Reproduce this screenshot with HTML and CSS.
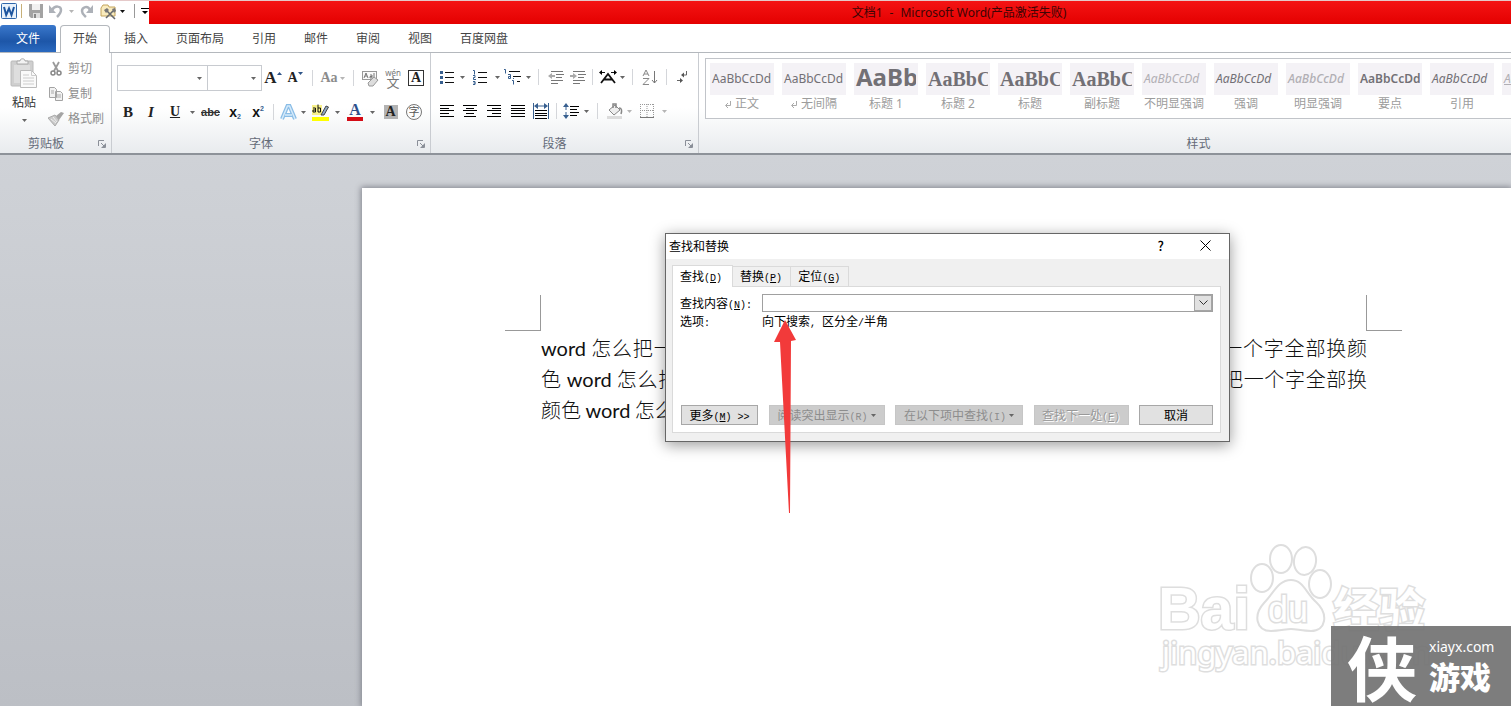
FILE: index.html
```html
<!DOCTYPE html>
<html lang="zh-CN">
<head>
<meta charset="utf-8">
<title>文档1 - Microsoft Word</title>
<link rel="stylesheet" href="styles.css">
</head>
<body>
<svg class="defs" width="0" height="0" aria-hidden="true">
  <symbol id="dd" viewBox="0 0 5 3"><path d="M0 0h5L2.500 3z"/></symbol>
  <symbol id="launch" viewBox="0 0 8 8"><path d="M.5 6V.5H6M3 3l3 3M7.500 3.500v4h-4" fill="none" stroke="#8a8f98"/><path d="M7 4v3H4z" fill="#8a8f98"/></symbol>
</svg>
<header class="titlebar">
  <div class="quick">
    <svg width="18" height="22" viewBox="0 0 18 22"><rect x="1.500" y="3.500" width="15" height="15" rx="1" fill="#e8f1fb" stroke="#2f66ab"/><path d="M4 7l2.200 8L9 8.500 11.500 15 14 7" fill="none" stroke="#1d559f" stroke-width="2"/></svg>
    <span class="qsep tan"></span>
    <button aria-label="保存"><svg width="14" height="14" viewBox="0 0 14 14"><path d="M0 0h14v14H2l-2-2z" fill="#a3a3a3"/><path d="M3 0h8v6H3z" fill="#f1f1f1"/><path d="M4 9h7v5H4z" fill="#ddd"/><path d="M5 10h2v4H5z" fill="#888"/></svg></button>
    <button aria-label="撤消"><svg width="14" height="14" viewBox="0 0 14 14"><path d="M3 6c3-5 9-4 9 0 0 3-2 5-4 7" fill="none" stroke="#adb1b8" stroke-width="2.500"/><path d="M0 1v8h7z" fill="#adb1b8"/></svg></button>
    <svg class="dd pale" width="5" height="3"><use href="#dd"/></svg>
    <button aria-label="恢复"><svg width="14" height="14" viewBox="0 0 14 14"><path d="M10 6C8 1 2 3 2 7c0 3 2 4 4 6" fill="none" stroke="#adb1b8" stroke-width="2.500"/><path d="M13 1v8H6z" fill="#adb1b8"/></svg></button>
    <button aria-label="工具"><svg width="18" height="17" viewBox="0 0 18 17"><path d="M1 5l2-3h5l1 2h6v9H1z" fill="#f9ebbd" stroke="#c3a45c"/><path d="M6 7l9 9M14 7l-8 8" stroke="#66696e" stroke-width="1.600"/><path d="M4 7l3-2 2 2-3 3zM12 6l3-1 1 3-2 2z" fill="#777"/></svg></button>
    <svg class="dd black" width="5" height="3"><use href="#dd"/></svg>
    <span class="qsep"></span>
    <svg width="8" height="7" viewBox="0 0 8 7"><path d="M0 0h8v1H0zM1 3h6L4 6z"/></svg>
  </div>
  <h1 class="title"><span>文档1</span><span>-</span><span>Microsoft Word(产品激活失败)</span></h1>
</header>
<nav class="tabs">
  <button class="tab file">文件</button>
  <button class="tab active">开始</button>
  <button class="tab">插入</button><button class="tab">页面布局</button><button class="tab">引用</button><button class="tab">邮件</button><button class="tab">审阅</button><button class="tab">视图</button><button class="tab">百度网盘</button>
</nav>
<section class="ribbon">
  <div class="group clipboard">
    <div class="clip-body">
      <button class="paste">
        <svg width="28" height="31" viewBox="0 0 28 31"><rect x="1" y="3" width="22" height="25" rx="1" fill="#cfcfcf" stroke="#bababa"/><rect x="4" y="7" width="16" height="18" fill="#dedede"/><path d="M7 6V3h3c0-3 5-3 5 0h3v3z" fill="#f3f3f3" stroke="#aaa"/><path d="M10.500 12.500h11l5 5v12h-16z" fill="#fafafa" stroke="#bbb"/><path d="M21.500 12.500v5h5M13 17h6M13 20h11M13 23h11M13 26h11" fill="none" stroke="#ccc"/></svg>
        <span>粘贴</span><svg class="dd" width="5" height="3"><use href="#dd"/></svg>
      </button>
      <div class="clip-list">
        <button><svg width="16" height="16" viewBox="0 0 16 16"><path d="M5 1l5 9M11 1l-5 9" stroke="#9a9a9a" stroke-width="1.800"/><circle cx="5" cy="12" r="2" fill="none" stroke="#888" stroke-width="1.500"/><circle cx="11" cy="12" r="2" fill="none" stroke="#888" stroke-width="1.500"/></svg>剪切</button>
        <button><svg width="16" height="16" viewBox="0 0 16 16"><path d="M1.500 1.500h5l2 2v8h-7zM7.500 5.500h5l2 2v7h-7z" fill="#f2f2f2" stroke="#a3a3a3"/><path d="M3 5h3M3 7h3M9 9h4M9 11h4" stroke="#aaa"/></svg>复制</button>
        <button><svg width="16" height="16" viewBox="0 0 16 16"><path d="M0 7l7-3 4 5-4 6z" fill="#c9c9c9" stroke="#aaa"/><path d="M8 5l5-4 3 1-5 7z" fill="#a4a4a4"/><path d="M3 8l5 4M5 6l4 5" stroke="#eee"/></svg>格式刷</button>
      </div>
    </div>
    <footer><span>剪贴板</span><svg width="8" height="8"><use href="#launch"/></svg></footer>
  </div>
  <div class="group font">
    <div class="row f1">
      <div class="combo"><input aria-label="字体"><svg class="dd" width="5" height="3"><use href="#dd"/></svg></div>
      <div class="combo"><input aria-label="字号"><svg class="dd" width="5" height="3"><use href="#dd"/></svg></div>
      <button class="serif g16">A<svg width="5" height="3" viewBox="0 0 5 3"><path d="M0 3h5L2.500 0z" fill="#2e5488"/></svg></button>
      <button class="serif g13">A<svg width="5" height="3" viewBox="0 0 5 3"><path d="M0 0h5L2.500 3z" fill="#2e5488"/></svg></button>
      <span class="sep"></span>
      <button class="serif case">Aa<svg class="dd pale" width="5" height="3"><use href="#dd"/></svg></button>
      <span class="sep"></span>
      <button aria-label="清除格式"><svg width="17" height="17" viewBox="0 0 17 17"><rect x=".5" y="1.500" width="14" height="8" fill="#fafafa" stroke="#999"/><path d="M2 8l2-5 2 5M3 6h2M8 5h2v3H8V6.500h2M12 3v5" fill="none" stroke="#777"/><path d="M6 13l6-6 4 3-5 6H7z" fill="#ddd" stroke="#999"/></svg></button>
      <button class="pinyin"><span>wén</span><b>文</b></button>
      <button class="serif boxed">A</button>
    </div>
    <div class="row f2">
      <button class="serif g15">B</button><button class="serif g15 ital">I</button><button class="serif g13 uline">U</button><svg class="dd" width="5" height="3"><use href="#dd"/></svg>
      <button class="strike">abc</button><button class="sub">x<sub>2</sub></button><button class="sub">x<sup>2</sup></button><span class="sep"></span>
      <button aria-label="文本效果"><svg width="17" height="17" viewBox="0 0 17 17"><path d="M2 15L7.500 2h2L15 15M5 11h7" fill="none" stroke="#8abde6" stroke-width="4"/><path d="M2 15L7.500 2h2L15 15M5 11h7" fill="none" stroke="#d5eafa" stroke-width="1.500"/></svg></button><svg class="dd" width="5" height="3"><use href="#dd"/></svg>
      <button aria-label="突出显示"><svg width="17" height="18" viewBox="0 0 17 18"><path d="M0 2h10v10H0z" fill="#f7f08a"/><path d="M0 14h17v4H0z" fill="#ff0"/><path d="M1 5h2.500v4H1V7h2M6 1.500V9h2.500V5H6" fill="none" stroke="#111"/><path d="M9 12l5-9 2.500 1-4.500 8z" fill="#8fa9c5" stroke="#444"/></svg></button><svg class="dd" width="5" height="3"><use href="#dd"/></svg>
      <button class="serif color">A</button><svg class="dd" width="5" height="3"><use href="#dd"/></svg>
      <button class="serif shade">A</button><button class="circle">字</button>
    </div>
    <footer><span>字体</span><svg width="8" height="8"><use href="#launch"/></svg></footer>
  </div>
  <div class="group para">
    <div class="row p1">
      <button aria-label="项目符号"><svg width="14" height="13" viewBox="0 0 14 13"><path d="M5 1.500h9M5 6.500h9M5 11.500h9" stroke="#111"/><path d="M0 0h3v3H0zM0 5h3v3H0zM0 10h3v3H0z" fill="#375f8f"/></svg></button><svg class="dd" width="5" height="3"><use href="#dd"/></svg>
      <button aria-label="编号"><svg width="14" height="15" viewBox="0 0 14 15"><path d="M5 2.500h9M5 7.500h9M5 12.500h9" stroke="#111"/><path d="M0 .5h1.500v4M0 5.500h2v2H.5v2H3M0 11.500h2v3H0M.5 13h2" fill="none" stroke="#375f8f"/></svg></button><svg class="dd" width="5" height="3"><use href="#dd"/></svg>
      <button aria-label="多级列表"><svg width="18" height="16" viewBox="0 0 18 16"><path d="M5 2.500h11M9 7.500h8M13 12.500h3" stroke="#111"/><path d="M0 .5h1.500v4M4 5.500h2.500v4h-2v-2h2M8 11.500h1.500v4M9 9.500h1" fill="none" stroke="#375f8f"/></svg></button><svg class="dd" width="5" height="3"><use href="#dd"/></svg>
      <span class="sep"></span>
      <button aria-label="减少缩进"><svg width="16" height="14" viewBox="0 0 16 14"><path d="M3 1.500h12M8 4.500h8M8 7.500h6M3 10.500h12M3 13.500h7" stroke="#777"/><path d="M0 6l4-3v2h3v2H4v2z" fill="#aaa"/></svg></button>
      <button aria-label="增加缩进"><svg width="16" height="14" viewBox="0 0 16 14"><path d="M3 1.500h12M8 4.500h8M8 7.500h6M3 10.500h12M3 13.500h7" stroke="#777"/><path d="M7 6L3 3v2H0v2h3v2z" fill="#aaa"/></svg></button>
      <span class="sep"></span>
      <button aria-label="中文版式"><svg width="18" height="14" viewBox="0 0 18 14"><path d="M2 13L9 4l7 9M5 9.500h8" fill="none" stroke="#111" stroke-width="1.800"/><path d="M2 2.500h4M12 2.500h4" stroke="#111"/><path d="M3 0v5L0 2.500zM15 0v5l3-2.500z"/></svg></button><svg class="dd" width="5" height="3"><use href="#dd"/></svg>
      <span class="sep"></span>
      <button aria-label="排序"><svg width="16" height="17" viewBox="0 0 16 17"><path d="M1 7l3-6 3 6M2 5h4M1 9.500h6l-6 6h6" fill="none" stroke="#888"/><path d="M12.500 2v12M10 11l2.500 3L15 11" fill="none" stroke="#777"/></svg></button>
      <span class="sep"></span>
      <button aria-label="显示编辑标记"><svg width="12" height="13" viewBox="0 0 12 13"><path d="M9.500 0v4H5M0 9.500h4" fill="none" stroke="#666"/><path d="M7 1.500v5L4 4zM3 7v5l3-2.500z" fill="#555"/></svg></button>
    </div>
    <div class="row p2">
      <button aria-label="左对齐"><svg width="14" height="12" viewBox="0 0 14 12"><path d="M0 .5h14M0 3.500h9M0 5.500h14M0 8.500h9M0 11.500h14" stroke="#000"/></svg></button>
      <button aria-label="居中"><svg width="14" height="12" viewBox="0 0 14 12"><path d="M0 .5h14M3 3.500h8M0 5.500h14M3 8.500h8M1 11.500h12" stroke="#000"/></svg></button>
      <button aria-label="右对齐"><svg width="14" height="12" viewBox="0 0 14 12"><path d="M0 .5h14M5 3.500h9M0 5.500h14M5 8.500h9M0 11.500h14" stroke="#000"/></svg></button>
      <button aria-label="两端对齐"><svg width="14" height="12" viewBox="0 0 14 12"><path d="M0 .5h14M0 3.500h14M0 5.500h14M0 8.500h14M0 11.500h14" stroke="#000"/></svg></button>
      <button aria-label="分散对齐"><svg width="16" height="16" viewBox="0 0 16 16"><path d="M.5 0v16M15.500 0v16M3 3h10" stroke="#375f8f"/><path d="M5 0v6L1 3zM11 0v6l4-3z" fill="#375f8f"/><path d="M2 7.500h12M2 10.500h12M2 12.500h12M2 15.500h12" stroke="#000"/></svg></button>
      <span class="sep"></span>
      <button aria-label="行距"><svg width="16" height="16" viewBox="0 0 16 16"><path d="M3 2v12" stroke="#375f8f" stroke-dasharray="5 2"/><path d="M0 4l3-4 3 4zM0 12l3 4 3-4z" fill="#375f8f"/><path d="M7 3.500h9M7 6.500h7M7 9.500h9M7 12.500h7" stroke="#000"/></svg></button><svg class="dd" width="5" height="3"><use href="#dd"/></svg>
      <span class="sep"></span>
      <button aria-label="底纹"><svg width="16" height="16" viewBox="0 0 16 16"><path d="M0 13h15v3H0z" fill="#dcdcdc"/><path d="M2 7l6-5 5 5-6 5z" fill="#eee" stroke="#888"/><path d="M6 5V1h3v4M12 5c3 0 3 3 2 6" fill="none" stroke="#888" stroke-width="1.500"/></svg></button><svg class="dd pale" width="5" height="3"><use href="#dd"/></svg>
      <button aria-label="边框"><svg width="14" height="14" viewBox="0 0 14 14"><path d="M.5 0v13M13.500 0v13M7 0v13M0 .5h14M0 6.500h14" fill="none" stroke="#999" stroke-dasharray="1 1"/><path d="M0 13.500h14" stroke="#777"/></svg></button><svg class="dd pale" width="5" height="3"><use href="#dd"/></svg>
    </div>
    <footer><span>段落</span><svg width="8" height="8"><use href="#launch"/></svg></footer>
  </div>
  <div class="group styles">
    <div class="gallery">
      <button><span class="sample">AaBbCcDd</span><small><svg width="6" height="7" viewBox="0 0 6 7"><path d="M5.500 0v4.500H1M3 2L.5 4.500 3 7" fill="none" stroke="#aaa"/></svg>正文</small></button>
      <button><span class="sample">AaBbCcDd</span><small><svg width="6" height="7" viewBox="0 0 6 7"><path d="M5.500 0v4.500H1M3 2L.5 4.500 3 7" fill="none" stroke="#aaa"/></svg>无间隔</small></button>
      <button><span class="sample h1">AaBb</span><small>标题 1</small></button>
      <button><span class="sample h2">AaBbC</span><small>标题 2</small></button>
      <button><span class="sample h2">AaBbC</span><small>标题</small></button>
      <button><span class="sample h2">AaBbC</span><small>副标题</small></button>
      <button><span class="sample it light">AaBbCcDd</span><small>不明显强调</small></button>
      <button><span class="sample it">AaBbCcDd</span><small>强调</small></button>
      <button><span class="sample it light strong">AaBbCcDd</span><small>明显强调</small></button>
      <button><span class="sample bold">AaBbCcDd</span><small>要点</small></button>
      <button><span class="sample it">AaBbCcDd</span><small>引用</small></button>
      <button><span class="sample it light under">AaBbCcDd</span><small>&nbsp;</small></button>
    </div>
    <footer><span>样式</span></footer>
  </div>
</section>
<main class="workspace">
  <article class="page">
    <div class="marks"><i class="mark left"></i><i class="mark right"></i></div>
    <p class="line full"><span>word</span> 怎么把一个字全部换颜色 <span>word</span> 怎么把一个字全部换颜色 <span>word</span> 怎么把一个字全部换颜</p>
    <p class="line full">色 <span>word</span> 怎么把一个字全部换颜色 <span>word</span> 怎么把一个字全部换颜色 <span>word</span> 怎么把一个字全部换</p>
    <p class="line">颜色 <span>word</span> 怎么把一个字全部换颜色</p>
  </article>
</main>
<section class="dialog" role="dialog" aria-labelledby="dlg">
  <header class="dlg-title"><h2 id="dlg">查找和替换</h2><button class="help">?</button><button aria-label="关闭"><svg width="11" height="11" viewBox="0 0 11 11"><path d="M.5.5l10 10M10.500.5l-10 10" stroke="#000"/></svg></button></header>
  <div class="dlg-body">
    <div class="dlg-tabs"><button class="on">查找<span class="key">(<u>D</u>)</span></button><button>替换<span class="key">(<u>P</u>)</span></button><button>定位<span class="key">(<u>G</u>)</span></button></div>
    <div class="panel">
      <div class="field"><label for="q">查找内容<span class="key">(<u>N</u>):</span></label><div class="find"><input id="q"><button aria-label="展开"><svg width="9" height="6" viewBox="0 0 9 6"><path d="M.5.5l4 4 4-4" fill="none" stroke="#333"/></svg></button></div></div>
      <div class="field opts"><span>选项<span class="key">:</span></span><span>向下搜索<span class="key">, </span>区分全<span class="key">/</span>半角</span></div>
      <div class="actions">
        <button class="b1">更多<span class="key">(<u>M</u>) &gt;&gt;</span></button>
        <button class="off b2" disabled>阅读突出显示<span class="key">(R)</span><svg class="dd" width="5" height="3"><use href="#dd"/></svg></button>
        <button class="off b3" disabled>在以下项中查找<span class="key">(I)</span><svg class="dd" width="5" height="3"><use href="#dd"/></svg></button>
        <button class="off emboss b4" disabled>查找下一处<span class="key">(<u>F</u>)</span></button>
        <button class="b5">取消</button>
      </div>
    </div>
  </div>
</section>
<svg class="arrow" width="24" height="194" viewBox="0 0 24 194"><path d="M12 0l11 20-5 1-1 172h-1L7 22l-6 0z" fill="#f23a3a"/></svg>
<svg class="watermark" width="290" height="160" viewBox="0 0 290 160" aria-label="Baidu 经验">
  <g fill="#fff" stroke="#dedede" stroke-width="2">
    <ellipse cx="131" cy="39" rx="11" ry="14"/><ellipse cx="155" cy="41" rx="11" ry="14" transform="rotate(8 155 41)"/><ellipse cx="112" cy="58" rx="11" ry="14"/><ellipse cx="170" cy="64" rx="11" ry="14"/>
    <path d="M141 60c12 0 15 13 25 22 13 12 10 29-5 29-8 0-15-2-20-2s-12 2-20 2c-15 0-18-16-7-28 10-10 14-23 27-23z"/>
    <g paint-order="stroke" stroke-width="3">
      <text x="8" y="109" font-family="Liberation Sans" font-size="59" font-weight="700">Bai</text>
      <text x="118" y="102" font-family="Liberation Sans" font-size="36">du</text>
      <text x="183" y="106" font-family="Noto Sans CJK SC" font-size="46" font-weight="700">经验</text>
      <text x="12" y="144" font-family="Noto Sans" font-size="31">jingyan.baidu.com</text>
    </g>
  </g>
</svg>
<aside class="brand"><span class="glyph">侠</span><div><span>xiayx.com</span><strong>游戏</strong></div></aside>
</body>
</html>
```
FILE: styles.css
```css
* { box-sizing: border-box; }
body {
  margin: 0;
  height: 100vh;
  display: flex;
  flex-direction: column;
  position: relative;
  overflow: hidden;
  background: #fff;
  color: #222;
  font: 12px/16px "Noto Sans", "Noto Sans CJK SC", sans-serif;
}
button {
  display: flex;
  align-items: center;
  justify-content: center;
  margin: 0;
  padding: 0;
  border: 0;
  background: none;
  color: inherit;
  font: inherit;
  white-space: nowrap;
}
input { min-width: 0; border: 0; padding: 0; background: none; font: inherit; outline: 0; }
h1, h2, p { margin: 0; font-weight: 400; }
svg { flex: none; }
.defs { position: absolute; }
.dd { fill: #666; }
.dd.pale { fill: #b5b5b5; }
.dd.black { fill: #111; }

.titlebar { display: flex; height: 24px; border-top: 1px solid #e5c9c9; }
.quick { width: 149px; display: flex; align-items: center; gap: 6px; padding: 0 0 3px; }
.qsep { width: 1px; height: 14px; background: #999; }
.qsep.tan { background: #c7b078; margin: 0 1px 0 -3px; }
.quick button + .black { margin-left: -4px; }
.quick .black + .qsep { margin: 0 0 0 3px; }
.title {
  flex: 1;
  display: flex;
  justify-content: center;
  gap: 7px;
  padding-left: 258px;
  background: linear-gradient(#f41414, #e40000);
  color: #3d0505;
  font-size: 12px;
  line-height: 23px;
}

.tabs { display: flex; align-items: flex-end; height: 29px; border-bottom: 1px solid #b4b8bd; background: #fff; }
.tab { height: 27px; padding: 0 14px; color: #444; }
.tab.file {
  width: 56px;
  margin-right: 4px;
  border-radius: 3px 3px 0 0;
  background: linear-gradient(#3a78cc, #1d56a8 60%, #2a69bf);
  color: #fff;
}
.tab.active {
  width: 50px;
  height: 28px;
  margin-bottom: -1px;
  padding: 0 0 1px;
  border: 1px solid #b4b8bd;
  border-bottom: 0;
  border-radius: 4px 4px 0 0;
  background: #fff;
}

.ribbon {
  flex: none;
  display: flex;
  height: 102px;
  overflow: hidden;
  border-bottom: 2px solid #8d9299;
  background: linear-gradient(#fff 55%, #e8ebee);
}
.group { flex: none; display: flex; flex-direction: column; border-right: 1px solid #c9ccd1; }
.group footer { display: flex; align-items: center; height: 18px; margin-top: auto; padding-right: 5px; color: #646b78; }
.group footer span { flex: 1; text-align: center; padding-right: 6px; }
.clipboard { width: 112px; }
.clip-body { display: flex; color: #8e8e8e; padding-top: 5px; }
.paste { width: 48px; flex-direction: column; justify-content: flex-start; color: #333; }
.paste span { margin: 6px 0 8px; }
.clip-list { display: flex; flex-direction: column; gap: 9px; align-items: flex-start; padding-top: 3px; }
.clip-list button { gap: 4px; height: 16px; }
.font { width: 319px; padding-left: 5px; }
.para { width: 268px; padding-left: 5px; }
.font footer span, .para footer span { padding-right: 12px; }
.styles { width: 1000px; padding-left: 6px; }

.row { display: grid; align-items: center; justify-items: center; }
.f1, .p1 { height: 26px; margin-top: 12px; }
.p1 { margin-top: 11px; }
.f2, .p2 { height: 24px; margin-top: 9px; }
.f1 { grid-template-columns: 91px 54px 22px 22px 12px 29px 12px 22px 24px 22px; }
.f2 { grid-template-columns: 22px 24px 24px 11px 25px 24px 22px 9px 21px 8px 26px 9px 26px 9px 27px 20px; }
.p1 { grid-template-columns: 21px 11px 24px 10px 22px 8px 13px 22px 21px 9px 21px 8px 13px 22px 10px 24px; }
.p2 { grid-template-columns: 22px 24px 24px 24px 22px 8px 22px 8px 15px 20px 9px 26px 8px; }
.sep { width: 1px; height: 16px; background: #d4d6da; }
.combo { display: flex; align-items: center; width: 100%; height: 26px; padding-right: 5px; border: 1px solid #c8cbd0; }
.combo + .combo { border-left: 0; }
.combo input { flex: 1; width: 20px; }
.serif { font-family: "Liberation Serif", serif; font-weight: 700; color: #222; }
.g16 { font-size: 17px; }
.g15 { font-size: 15px; }
.g13 { font-size: 14px; }
.ital { font-style: italic; }
.uline { text-decoration: underline; }
.g16 svg, .f1 .g13 svg { margin-bottom: 9px; }
.case { font-size: 14px; color: #8c8c8c; gap: 2px; }
.pinyin { flex-direction: column; color: #777; font-size: 8px; line-height: 7px; }
.pinyin b { font-size: 13px; line-height: 12px; font-weight: 400; }
.boxed { width: 16px; height: 16px; border: 1px solid #333; font-size: 14px; }
.strike { font: 700 11px/16px "Liberation Sans", sans-serif; color: #333; text-decoration: line-through; }
.sub { font: 700 14px/16px "Liberation Sans", sans-serif; color: #111; }
.sub sub, .sub sup { font-size: 7px; line-height: 7px; color: #375f8f; }
.sub sub { margin-top: 9px; }
.sub sup { margin-bottom: 8px; }
.color { width: 16px; height: 17px; border-bottom: 4px solid #d40b16; color: #2e4f8d; font-size: 16px; }
.shade { width: 14px; height: 14px; background: #b3b3b3; font-size: 14px; }
.circle { width: 16px; height: 16px; border: 1px solid #777; border-radius: 50%; font-size: 11px; color: #555; }

.gallery { display: flex; gap: 8px; height: 61px; margin-top: 5px; padding: 4px; border: 1px solid #c1c4c9; background: #fff; }
.gallery button { width: 64px; flex: none; flex-direction: column; justify-content: flex-start; color: #9c9c9c; }
.sample {
  width: 64px;
  height: 32px;
  padding: 0 2px;
  border-right: 2px solid #f4f2f6;
  background: #f4f2f6;
  overflow: hidden;
  color: #727075;
  font-size: 12px;
  line-height: 31px;
  text-align: left;
}
.sample.h1 { font-size: 24px; font-weight: 700; line-height: 28px; }
.sample.h2 { font: 700 20px/32px "Liberation Serif", serif; }
.sample.it { font-style: italic; }
.sample.light { color: #b1afb4; }
.sample.strong { font-weight: 500; }
.sample.bold { font-weight: 600; }
.sample.under { text-decoration: underline; }
.gallery small { display: flex; align-items: center; gap: 4px; font-size: 12px; line-height: 18px; }
.styles footer { padding: 0; }

.workspace { flex: 1; padding: 33px 0 0 362px; background: linear-gradient(#cfd2d7, #bcbfc5); display: flex; }
.page { flex: 1; padding: 107px 109px 0 143px; background: #fff; box-shadow: 0 0 6px 1px #80838c; }
.marks { display: flex; justify-content: space-between; }
.mark { width: 36px; height: 36px; border-bottom: 1px solid #999; }
.mark.left { border-right: 1px solid #999; }
.mark.right { border-left: 1px solid #999; }
.line { margin: 0 35px 0 36px; font: 300 20px/31px "Noto Sans CJK SC", sans-serif; white-space: nowrap; color: #111; }
.line span { font: 400 20px/20px Lato, sans-serif; }
.line.full { text-align: justify; text-align-last: justify; }
.marks + .line { margin-top: 1px; }

.dialog { position: absolute; left: 665px; top: 233px; width: 565px; border: 1px solid #666; background: #f0f0f0; box-shadow: 0 3px 14px rgba(0, 0, 0, .4); color: #000; font-family: "Noto Sans CJK SC", sans-serif; }
.dlg-title { display: flex; align-items: center; height: 25px; padding: 0 18px 2px 3px; gap: 36px; background: #fff; }
.dlg-title h2 { flex: 1; font-size: 12px; }
.help { font-weight: 500; font-size: 13px; }
.dlg-body { padding: 6px 8px 8px 6px; }
.dlg-tabs { display: flex; align-items: flex-end; }
.dlg-tabs button { height: 20px; padding: 1px 8px 0 7px; border: 1px solid #dadada; border-bottom: 0; border-left: 0; }
.dlg-tabs .on { height: 22px; margin-bottom: -1px; padding: 2px 10px 0 7px; border-left: 1px solid #dadada; background: #fff; position: relative; }
.dlg-tabs button, .actions button { align-items: baseline; }
.key { font: 10px/12px "Liberation Mono", monospace; white-space: pre; }
.panel { padding: 7px; border: 1px solid #dadada; background: #fff; }
.field { display: grid; grid-template-columns: 82px 1fr; align-items: center; }
.find { display: flex; height: 18px; border: 1px solid #a0a0a0; }
.find input { flex: 1; }
.find button { width: 18px; border: 1px solid #a5a5a5; background: #e1e1e1; }
.opts { line-height: 18px; }
.actions { display: flex; justify-content: space-between; margin: 75px 0 0 1px; }
.actions button { height: 20px; border: 1px solid #a7a7a7; background: #e1e1e1; line-height: 18px; }
.actions .off { border-color: #c6c6c6; background: #ccc; color: #8d8d8d; }
.actions .dd { margin-left: 3px; align-self: center; }
.actions .emboss { color: #999; text-shadow: 1px 1px #fff; }
.b1 { width: 77px; }
.b2 { width: 116px; }
.b3 { width: 128px; }
.b4 { width: 95px; }
.b5 { width: 74px; }
.arrow { position: absolute; left: 773px; top: 320px; }
.watermark { position: absolute; right: 71px; bottom: 26px; }
.brand { position: absolute; right: 0; bottom: 0; width: 180px; height: 80px; display: flex; align-items: center; gap: 12px; padding-left: 16px; background: rgba(115, 115, 115, .93); color: #fff; }
.glyph { font: 700 70px/76px "Noto Sans CJK SC", sans-serif; }
.brand div { display: flex; flex-direction: column; }
.brand div span { font-size: 14px; line-height: 20px; }
.brand strong { font: 900 31px/38px "Noto Sans CJK SC", sans-serif; }
```
